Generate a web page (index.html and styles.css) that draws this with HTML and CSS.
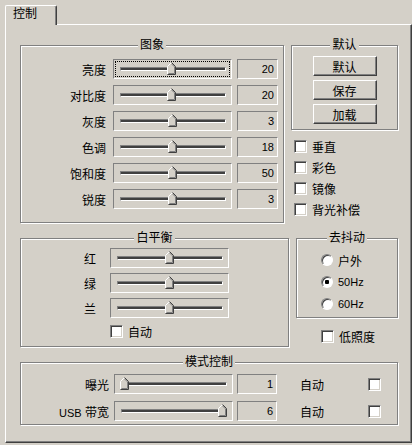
FILE: index.html
```html
<!DOCTYPE html>
<html lang="zh-CN">
<head>
    <meta charset="UTF-8">
    <meta name="viewport" content="width=device-width, initial-scale=1.0">
    <title>控制</title>
    <link rel="stylesheet" href="styles.css">
</head>
<body>
    <!-- shared trackbar thumb -->
    <svg class="defs" width="0" height="0">
        <symbol id="thumb" viewBox="0 0 9 13">
            <path d="M0.5 12.5V4.5L4.5 0.5L8.5 4.5V12.5Z" fill="#d4d0c8"/>
            <path d="M0.5 12V4.5L4.5 0.5" fill="none" stroke="#fff"/>
            <path d="M4.5 0.5L8.5 4.5V12.5H0.5" fill="none" stroke="#404040"/>
            <path d="M4.5 1.9L7.5 4.9V11.5H1.5" fill="none" stroke="#808080"/>
        </symbol>
    </svg>

    <div class="tabs"><div class="tab">控制</div></div>

    <div class="panel">
        <!-- Image + defaults -->
        <div class="row">
            <div class="group image">
                <div class="group-title">图象</div>
                <div class="srow"><span class="label">亮度</span><div class="slider focus"><div class="track"></div><svg class="thumb" style="left:53px"><use href="#thumb"/></svg></div><div class="value">20</div></div>
                <div class="srow"><span class="label">对比度</span><div class="slider"><div class="track"></div><svg class="thumb" style="left:53px"><use href="#thumb"/></svg></div><div class="value">20</div></div>
                <div class="srow"><span class="label">灰度</span><div class="slider"><div class="track"></div><svg class="thumb" style="left:54px"><use href="#thumb"/></svg></div><div class="value">3</div></div>
                <div class="srow"><span class="label">色调</span><div class="slider"><div class="track"></div><svg class="thumb" style="left:54px"><use href="#thumb"/></svg></div><div class="value">18</div></div>
                <div class="srow"><span class="label">饱和度</span><div class="slider"><div class="track"></div><svg class="thumb" style="left:54px"><use href="#thumb"/></svg></div><div class="value">50</div></div>
                <div class="srow"><span class="label">锐度</span><div class="slider"><div class="track"></div><svg class="thumb" style="left:54px"><use href="#thumb"/></svg></div><div class="value">3</div></div>
            </div>

            <div class="side">
                <div class="group defaults">
                    <div class="group-title">默认</div>
                    <div class="btn">默认</div>
                    <div class="btn">保存</div>
                    <div class="btn">加载</div>
                </div>
                <div class="checks">
                    <div class="check-row"><span class="box"></span>垂直</div>
                    <div class="check-row"><span class="box"></span>彩色</div>
                    <div class="check-row"><span class="box"></span>镜像</div>
                    <div class="check-row"><span class="box"></span>背光补偿</div>
                </div>
            </div>
        </div>

        <!-- White balance + flicker -->
        <div class="row">
            <div class="group wb">
                <div class="group-title">白平衡</div>
                <div class="srow"><span class="label">红</span><div class="slider"><div class="track"></div><svg class="thumb" style="left:54px"><use href="#thumb"/></svg></div></div>
                <div class="srow"><span class="label">绿</span><div class="slider"><div class="track"></div><svg class="thumb" style="left:54px"><use href="#thumb"/></svg></div></div>
                <div class="srow"><span class="label">兰</span><div class="slider"><div class="track"></div><svg class="thumb" style="left:54px"><use href="#thumb"/></svg></div></div>
                <div class="check-row"><span class="box"></span>自动</div>
            </div>

            <div class="side2">
                <div class="group flicker">
                    <div class="group-title">去抖动</div>
                    <div class="radio-row"><span class="radio"></span>户外</div>
                    <div class="radio-row latin"><span class="radio on"></span>50Hz</div>
                    <div class="radio-row latin"><span class="radio"></span>60Hz</div>
                </div>
                <div class="check-row lowlight"><span class="box"></span>低照度</div>
            </div>
        </div>

        <!-- Mode control -->
        <div class="row">
            <div class="group mode">
                <div class="group-title">模式控制</div>
                <div class="srow"><span class="label">曝光</span><div class="slider"><div class="track"></div><svg class="thumb" style="left:5px"><use href="#thumb"/></svg></div><div class="value">1</div><span class="auto">自动</span><span class="box"></span></div>
                <div class="srow"><span class="label"><span class="latin">USB</span> 带宽</span><div class="slider"><div class="track"></div><svg class="thumb" style="left:103px"><use href="#thumb"/></svg></div><div class="value">6</div><span class="auto">自动</span><span class="box"></span></div>
            </div>
        </div>
    </div>
</body>
</html>
```

FILE: styles.css
```css
body {
    margin: 0;
    padding-top: 5px;
    width: 412px;
    height: 445px;
    box-sizing: border-box;
    overflow: hidden;
    background-color: #d4d0c8;
    font-family: "Liberation Sans", "Noto Sans CJK SC", sans-serif;
    font-size: 12px;
    color: #000;
}

.defs {
    display: block;
    width: 0;
    height: 0;
    overflow: hidden;
}

/* Tab strip */
.tabs {
    display: flex;
    padding-left: 5px;
}

.tab {
    position: relative;
    z-index: 1;
    width: 52px;
    height: 20px;
    box-sizing: border-box;
    margin-bottom: -1px;
    padding: 1px 0 0 7px;
    border-top: 1px solid #fff;
    border-left: 1px solid #fff;
    border-right: 1px solid #404040;
    border-top-left-radius: 2px;
    border-top-right-radius: 2px;
    box-shadow: inset -1px 0 0 #808080;
    background-color: #d4d0c8;
    line-height: 14px;
}

.panel {
    margin-left: 5px;
    width: 407px;
    height: 419px;
    box-sizing: border-box;
    padding: 20px 0 0 14px;
    border: 1px solid;
    border-color: #fff #404040 #404040 #fff;
    box-shadow: inset -1px -1px 0 #808080;
}

.row {
    display: flex;
    align-items: flex-start;
}

.row + .row {
    margin-top: 15px;
}

/* Etched group box: title sits on the top edge */
.group {
    box-sizing: border-box;
    border: 1px solid #808080;
    box-shadow: 1px 1px 0 #fff, inset 1px 1px 0 #fff;
}

.group-title {
    display: table;
    margin: -8px auto 0;
    padding: 0 2px;
    line-height: 14px;
    background-color: #d4d0c8;
}

/* Slider rows */
.srow {
    display: flex;
    align-items: center;
    height: 20px;
}

.srow + .srow {
    margin-top: 6px;
}

.label {
    text-align: right;
    white-space: nowrap;
}

.slider {
    position: relative;
    width: 119px;
    height: 20px;
    box-sizing: border-box;
    border: 1px solid;
    border-color: #808080 #fff #fff #808080;
}

.slider.focus {
    outline: 1px dotted #000;
    outline-offset: -3px;
}

.track {
    margin: 7px 5px 0 6px;
    height: 4px;
    box-sizing: border-box;
    border: 1px solid;
    border-color: #808080 #fff #fff #808080;
    background-color: #404040;
}

.thumb {
    position: absolute;
    top: 2px;
    width: 9px;
    height: 13px;
}

.value {
    width: 41px;
    height: 20px;
    margin-left: 5px;
    box-sizing: border-box;
    padding-right: 3px;
    border: 1px solid;
    border-color: #808080 #fff #fff #808080;
    text-align: right;
    font-size: 11px;
    line-height: 18px;
}

.latin {
    font-size: 11px;
}

/* Checkbox / radio */
.check-row {
    display: flex;
    align-items: center;
    gap: 5px;
    height: 13px;
    white-space: nowrap;
}

.box {
    flex: none;
    width: 13px;
    height: 13px;
    box-sizing: border-box;
    border: 1px solid;
    border-color: #808080 #fff #fff #808080;
    box-shadow: inset 1px 1px 0 #404040, inset -1px -1px 0 #d4d0c8;
    background-color: #fff;
}

.radio-row {
    display: flex;
    align-items: center;
    gap: 5px;
    height: 22px;
    padding-left: 24px;
}

.radio {
    flex: none;
    width: 12px;
    height: 12px;
    box-sizing: border-box;
    border: 1px solid;
    border-color: #808080 #fff #fff #808080;
    border-radius: 50%;
    box-shadow: inset 1px 1px 0 #404040;
    background-color: #fff;
}

.radio.on {
    background: radial-gradient(circle, #000 0 2px, #fff 2.5px);
}

/* Image group */
.image {
    width: 264px;
    height: 178px;
    padding-bottom: 13px;
}

.image .group-title {
    margin-bottom: 7px;
}

.image .label {
    width: 85px;
    margin-right: 7px;
}

.side {
    width: 107px;
    margin-left: 7px;
}

.defaults {
    height: 85px;
    padding-bottom: 5px;
    display: flex;
    flex-direction: column;
    align-items: center;
    gap: 4px;
}

.btn {
    width: 64px;
    height: 20px;
    box-sizing: border-box;
    display: flex;
    align-items: center;
    justify-content: center;
    border: 1px solid;
    border-color: #fff #404040 #404040 #fff;
    box-shadow: inset -1px -1px 0 #808080;
}

.checks {
    margin-top: 10px;
    padding-left: 3px;
    display: flex;
    flex-direction: column;
    gap: 8px;
}

/* White balance */
.wb {
    width: 269px;
    height: 109px;
    padding-bottom: 8px;
}

.wb .group-title {
    margin-bottom: 3px;
}

.wb .label {
    width: 75px;
    margin-right: 14px;
}

.wb .srow + .srow {
    margin-top: 5px;
}

.wb .check-row {
    margin-top: 7px;
    padding-left: 89px;
}

.side2 {
    width: 102px;
    margin-left: 7px;
}

.flicker {
    height: 80px;
    padding-bottom: 2px;
}

.flicker .group-title {
    margin-bottom: 4px;
}

.lowlight {
    margin-top: 12px;
    padding-left: 25px;
}

/* Mode control */
.mode {
    width: 378px;
    height: 63px;
    padding-bottom: 3px;
}

.mode .group-title {
    margin-bottom: 5px;
}

.mode .srow + .srow {
    margin-top: 7px;
}

.mode .label {
    width: 88px;
    margin-right: 5px;
}

.mode .value {
    width: 40px;
    margin-left: 4px;
}

.auto {
    width: 68px;
    margin-left: 23px;
}
```
